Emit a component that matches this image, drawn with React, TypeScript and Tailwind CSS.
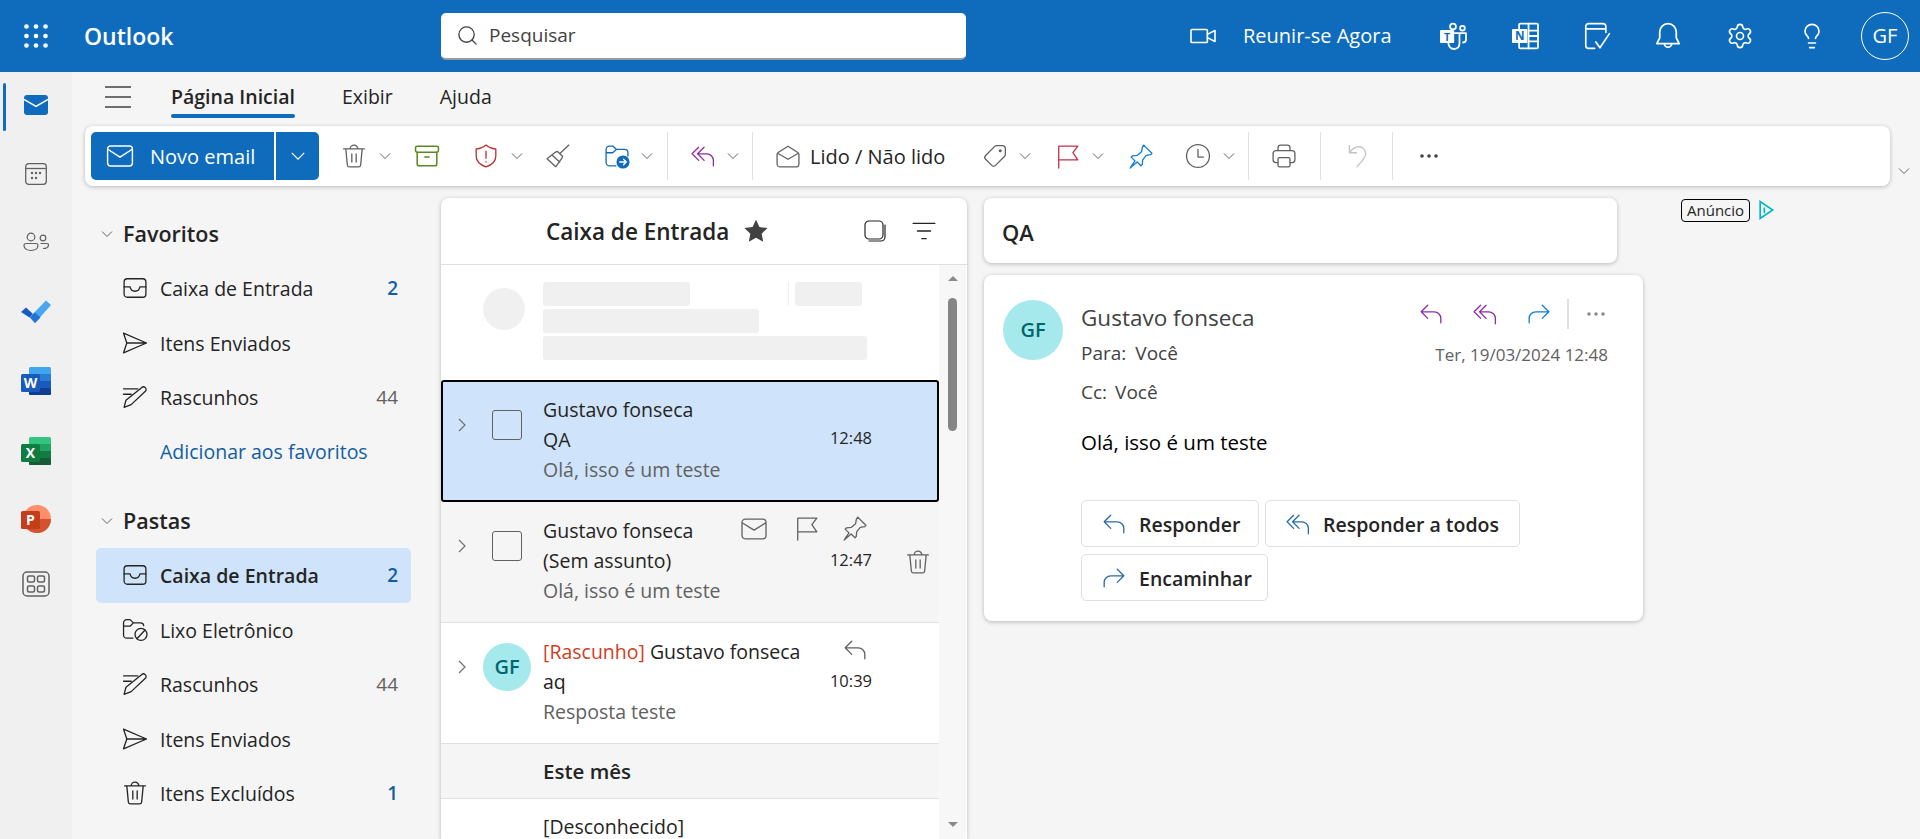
import type { ReactNode } from "react"
import { Search, Settings, Lightbulb } from "lucide-react"

const Ico = ({ children, className = "", sw = 1.2, size = 24 }: { children: ReactNode; className?: string; sw?: number; size?: number }) => (
  <svg
    viewBox="1 1 22 22"
    width={size}
    height={size}
    fill="none"
    stroke="currentColor"
    strokeWidth={sw}
    strokeLinecap="round"
    strokeLinejoin="round"
    className={`shrink-0 overflow-visible ${className}`}
  >
    {children}
  </svg>
)

type IconProps = { className?: string; size?: number; sw?: number }

const TrashIcon = (p: IconProps) => (
  <Ico {...p}>
    <path d="M2.5 5.5h19M8.5 5.5a3.5 3.5 0 0 1 7 0M4.5 5.5l1.4 14.7a2 2 0 0 0 2 1.8h8.2a2 2 0 0 0 2-1.8l1.4-14.7M10 10v7.5M14 10v7.5" />
  </Ico>
)
const ArchiveIcon = (p: IconProps) => (
  <Ico {...p} sw={1.4}>
    <rect x="1.5" y="3" width="21" height="5.5" rx="1.5" />
    <path d="M3 8.5V19a2 2 0 0 0 2 2h14a2 2 0 0 0 2-2V8.5M10 13h4" />
  </Ico>
)
const ShieldIcon = (p: IconProps) => (
  <Ico {...p}>
    <path d="M12 2C9.6 4.3 7 5.3 3 5.6V12c0 4.8 3 8 9 10 6-2 9-5.2 9-10V5.6C17 5.3 14.4 4.3 12 2z" />
    <path d="M12 7.5v6.5M12 17.2v.3" />
  </Ico>
)
const BroomIcon = (p: IconProps) => (
  <Ico {...p}>
    <path d="M22 2l-8.5 8M11.5 7.8l4.7 4.4-.6 1.7-5.7 8L2 14.5l7.8-6.1zM6.5 11l7 6.5" />
  </Ico>
)
const MoveIcon = (p: IconProps) => (
  <Ico {...p}>
    <path d="M11 21H5a3 3 0 0 1-3-3V6a3 3 0 0 1 3-3h3.5l3 3H19a3 3 0 0 1 3 3v3M2 9h6l3.5-3" />
    <circle cx="17.5" cy="17.5" r="6" fill="#0f6cbd" stroke="none" />
    <path d="M14.5 17.5h6M18 15l2.5 2.5-2.5 2.5" stroke="#fff" />
  </Ico>
)
const ReplyAllIcon = (p: IconProps) => (
  <Ico {...p}>
    <path d="M8 4L2 10l6 6M13 4l-6 6 6 6M7 10h8.5a6 6 0 0 1 6 6v5" />
  </Ico>
)
const ReplyIcon = (p: IconProps) => (
  <Ico {...p}>
    <path d="M9 4l-6 6 6 6M3 10h12a6 6 0 0 1 6 6v4" />
  </Ico>
)
const ForwardIcon = (p: IconProps) => (
  <Ico {...p}>
    <path d="M15 4l6 6-6 6M21 10H9a6 6 0 0 0-6 6v4" />
  </Ico>
)
const MailOpenIcon = (p: IconProps) => (
  <Ico {...p}>
    <path d="M2 10.5a2 2 0 0 1 1-1.7L12 3l9 5.8a2 2 0 0 1 1 1.7V19a3 3 0 0 1-3 3H5a3 3 0 0 1-3-3zM2.5 9.5L12 15l9.5-5.5" />
  </Ico>
)
const TagIcon = (p: IconProps) => (
  <Ico {...p}>
    <path d="M13.5 2.5H19A2.500 2.500 0 0 1 21.500 5v5.500a2.500 2.500 0 0 1-.7 1.800l-8.300 8.300a2.500 2.500 0 0 1-3.500 0l-5.600-5.600a2.500 2.500 0 0 1 0-3.500l8.300-8.300a2.500 2.500 0 0 1 1.800-.7z" />
    <circle cx="16.8" cy="7.2" r=".8" fill="currentColor" />
  </Ico>
)
const FlagIcon = (p: IconProps) => (
  <Ico {...p}>
    <path d="M3.5 23V3H21l-4.500 6 4.500 6.500H3.500" />
  </Ico>
)
const PinIcon = (p: IconProps) => (
  <Ico {...p}>
    <path d="M14.5 2l7.500 7.500-1 1.300-4.200.7-3.300 4-.3 4.200-1.200 1.300-3.500-3.500L2 23l4.500-6.500L3 13l1.300-1.200 4.200-.3 4-3.300.7-4.200z" />
  </Ico>
)
const ClockIcon = (p: IconProps) => (
  <Ico {...p}>
    <circle cx="12" cy="12" r="10.5" />
    <path d="M12 6v7h5" />
  </Ico>
)
const PrinterIcon = (p: IconProps) => (
  <Ico {...p}>
    <path d="M6.5 7V4.500A2.500 2.500 0 0 1 9 2h6a2.500 2.500 0 0 1 2.500 2.500V7" />
    <path d="M6.5 18h-2A2.500 2.500 0 0 1 2 15.500v-6A2.500 2.500 0 0 1 4.500 7h15A2.500 2.500 0 0 1 22 9.500v6a2.500 2.500 0 0 1-2.500 2.500h-2" />
    <rect x="6.5" y="13.5" width="11" height="8.5" rx="1.5" />
  </Ico>
)
const UndoIcon = (p: IconProps) => (
  <Ico {...p}>
    <path d="M5 2.5V9h6.500M5 9c3-4 6-5.500 8.500-5.500 4 0 6.500 3 6.500 6.500 0 4-5 8-8 12" />
  </Ico>
)
const DotsIcon = ({ className = "" }: { className?: string }) => (
  <svg viewBox="0 0 24 24" width="24" height="24" fill="currentColor" className={`shrink-0 ${className}`}>
    <circle cx="5" cy="12" r="1.8" />
    <circle cx="12" cy="12" r="1.8" />
    <circle cx="19" cy="12" r="1.8" />
  </svg>
)
const InboxIcon = (p: IconProps) => (
  <Ico {...p}>
    <rect x="2" y="3.5" width="20" height="17" rx="3" />
    <path d="M2 11h5.500c.5 2.500 2 4 4.500 4s4-1.500 4.500-4H22" />
  </Ico>
)
const SendIcon = (p: IconProps) => (
  <Ico {...p}>
    <path d="M1.5 3l21 9-21 9 3-9zM4.500 12h18" />
  </Ico>
)
const DraftIcon = (p: IconProps) => (
  <Ico {...p}>
    <path d="M1.5 4.500h13M1.500 9.500h7M2 21.500L3.700 15 18 3.500a2.400 2.400 0 0 1 3.500 3.300L8.500 19zM2 21.500L8.500 19" />
  </Ico>
)
const JunkIcon = (p: IconProps) => (
  <Ico {...p}>
    <path d="M10 19.5H4.500a3 3 0 0 1-3-3V5.500a3 3 0 0 1 3-3h3l3 3H17a3 3 0 0 1 3 2.500M1.500 8.500h6l3-3" />
    <circle cx="17.5" cy="16" r="5.5" />
    <path d="M13.8 20l7.400-8" />
  </Ico>
)
const Chevron = ({ className = "" }: { className?: string }) => (
  <svg viewBox="0 0 12 12" width="12" height="12" fill="none" stroke="currentColor" strokeWidth="1" className={`shrink-0 text-[#616161] ${className}`}>
    <path d="M1 3.5l5 5 5-5" />
  </svg>
)
const ChevronRight = () => (
  <svg viewBox="0 0 12 20" width="12" height="20" fill="none" stroke="#707070" strokeWidth="1.2" className="shrink-0">
    <path d="M3 4l6 6-6 6" />
  </svg>
)
const Sep = ({ className = "" }: { className?: string }) => <div className={`h-[48px] w-px shrink-0 bg-[#e0e0e0] ${className}`} />

const Waffle = () => (
  <svg viewBox="0 0 24 24" width="24" height="24" fill="#fff">
    {[2.5, 12, 21.5].map((y) => [2.5, 12, 21.5].map((x) => <circle key={`${x}-${y}`} cx={x} cy={y} r="2.3" />))}
  </svg>
)

const TopBar = () => (
  <header className="flex h-[72px] shrink-0 items-center bg-[#0f6cbd] text-white">
    <div className="ml-[24px]">
      <Waffle />
    </div>
    <span className="ml-[36px] w-[357px] text-[23px] font-semibold">Outlook</span>
    <div className="flex h-[47px] w-[525px] items-center rounded-[5px] border-b-2 border-[#9a9a9a] bg-white pl-[15px] text-[#424242]">
      <Search size={23} strokeWidth={1.4} className="text-[#424242]" />
      <span className="ml-[10px] text-[19px]">Pesquisar</span>
    </div>
    <div className="ml-[225px] flex items-center">
      <Ico size={24} sw={1.5}>
        <rect x="1" y="6" width="15" height="12" rx="1" />
        <path d="M16 10.5l7-3.500v10l-7-3.500" />
      </Ico>
      <span className="ml-[28px] w-[160px] whitespace-nowrap text-[20px]">Reunir-se Agora</span>
      <Ico size={26} className="ml-[37px]" sw={1.5}>
        <rect x="1" y="7" width="12" height="11" rx="1" fill="#fff" stroke="none" />
        <text x="7" y="16" textAnchor="middle" fontSize="9" fontWeight="700" fill="#0f6cbd" stroke="none" fontFamily="Open Sans, sans-serif">T</text>
        <circle cx="12" cy="4" r="2.5" />
        <circle cx="20" cy="5.5" r="2" />
        <path d="M13 9.5h10V15c0 1.500-1 2.500-2.500 2.500M8 18c.5 3 2.500 5 5 5 3 0 4.500-2 4.500-5V9.500" />
      </Ico>
      <Ico size={26} className="ml-[46px]" sw={1.5}>
        <rect x="7" y="1.5" width="16" height="21" rx="1" />
        <path d="M15 1.5v21M15 7.500h8M15 12h8M15 16.500h8" />
        <rect x="1" y="6" width="13" height="12" rx="1" fill="#fff" stroke="none" />
        <text x="7.5" y="15.5" textAnchor="middle" fontSize="10" fontWeight="700" fill="#0f6cbd" stroke="none" fontFamily="Open Sans, sans-serif">N</text>
      </Ico>
      <Ico size={26} className="ml-[46px]" sw={1.4}>
        <path d="M10 22.5H5A2.500 2.500 0 0 1 2.500 20V4A2.500 2.500 0 0 1 5 1.500h12A2.500 2.500 0 0 1 19.500 4v5M2.500 6h17M11 17l3.500 5L22.500 10" />
      </Ico>
      <Ico size={26} className="ml-[45px]" sw={1.5}>
        <path d="M12 1.5a7 7 0 0 0-7 7v5l-2.500 5h19L19 13.500v-5a7 7 0 0 0-7-7zM9 18.500a3 3 0 0 0 6 0" />
      </Ico>
      <Settings size={28} strokeWidth={1.4} className="ml-[45px] shrink-0" />
      <Lightbulb size={28} strokeWidth={1.4} className="ml-[44px] shrink-0" />
      <div className="ml-[35px] flex h-[48px] w-[48px] shrink-0 items-center justify-center rounded-full border border-white text-[20px]">GF</div>
    </div>
  </header>
)

const RailSlot = ({ children, className = "" }: { children: ReactNode; className?: string }) => (
  <div className={`flex w-[72px] justify-center ${className}`}>{children}</div>
)

const OfficeIcon = ({ letter, tile, colors }: { letter: string; tile: string; colors: string[] }) => (
  <svg viewBox="0 0 30 28" width="30" height="28">
    <rect x="8" y="0" width="22" height="28" rx="1.5" fill={colors[0]} />
    <rect x="8" y="7" width="22" height="7" fill={colors[1]} />
    <rect x="8" y="14" width="22" height="7" fill={colors[2]} />
    <rect x="8" y="21" width="22" height="7" rx="1" fill={colors[3]} />
    <rect x="0" y="7" width="19" height="18" rx="1.5" fill={tile} />
    <text x="9.5" y="21" textAnchor="middle" fontSize="14" fontWeight="700" fill="#fff" fontFamily="Open Sans, sans-serif">{letter}</text>
  </svg>
)

const Rail = () => (
  <nav className="relative flex w-[72px] shrink-0 flex-col bg-[#f0f0f0] pt-[23px]">
    <div className="absolute left-[3px] top-[11px] h-[48px] w-[3px] rounded-full bg-[#0f6cbd]" />
    <RailSlot>
      <svg viewBox="0 0 24 20" width="24" height="20">
        <rect width="24" height="20" rx="3" fill="#0f6cbd" />
        <path d="M0 4.5l12 7 12-7" fill="none" stroke="#fff" strokeWidth="1.5" />
      </svg>
    </RailSlot>
    <RailSlot className="mt-[48px] text-[#616161]">
      <svg viewBox="0 0 22 22" width="22" height="22" fill="none" stroke="currentColor" strokeWidth="1.3">
        <rect x=".7" y=".7" width="20.6" height="20.6" rx="3" />
        <path d="M1 5.5h20" />
        <g fill="currentColor" stroke="none">
          <circle cx="7" cy="10" r="1.2" />
          <circle cx="11" cy="10" r="1.2" />
          <circle cx="15" cy="10" r="1.2" />
          <circle cx="7" cy="15" r="1.2" />
          <circle cx="11" cy="15" r="1.2" />
        </g>
      </svg>
    </RailSlot>
    <RailSlot className="mt-[47px] text-[#616161]">
      <svg viewBox="0 0 26 20" width="26" height="20" fill="none" stroke="currentColor" strokeWidth="1.2">
        <circle cx="8" cy="5" r="3.8" />
        <path d="M1 13.5c0-1 1-2 2-2h10c1 0 2 1 2 2 0 3-3 5-7 5s-7-2-7-5z" />
        <circle cx="20" cy="6" r="2.8" />
        <path d="M17.5 11.5H24c1 0 1.500.5 1.500 1.500 0 2.500-2.500 3.500-5.500 3.500" />
      </svg>
    </RailSlot>
    <RailSlot className="mt-[48px]">
      <svg viewBox="0 0 30 24" width="30" height="24">
        <path d="M0 12l5-4.500 7 6.500-3.500 3.500z" fill="#185abd" />
        <path d="M8.5 17.500L25 .5l5 4.500L14 23z" fill="#4aa6ef" />
        <path d="M9 17l5-4.500 5.500 5L14 23z" fill="#2173d5" />
      </svg>
    </RailSlot>
    <RailSlot className="mt-[43px]">
      <OfficeIcon letter="W" tile="#185abd" colors={["#41a5ee", "#2b7cd3", "#185abd", "#103f91"]} />
    </RailSlot>
    <RailSlot className="mt-[42px]">
      <OfficeIcon letter="X" tile="#107c41" colors={["#33c481", "#21a366", "#107c41", "#185c37"]} />
    </RailSlot>
    <RailSlot className="mt-[40px]">
      <svg viewBox="0 0 30 28" width="30" height="28">
        <circle cx="16" cy="14" r="14" fill="#ff8f6b" />
        <path d="M2 14a14 14 0 0 0 28 0z" fill="#d35230" />
        <rect x="0" y="6" width="19" height="18" rx="1.5" fill="#c43e1c" />
        <text x="9.5" y="20" textAnchor="middle" fontSize="14" fontWeight="700" fill="#fff" fontFamily="Open Sans, sans-serif">P</text>
      </svg>
    </RailSlot>
    <RailSlot className="mt-[38px] text-[#616161]">
      <svg viewBox="0 0 28 26" width="28" height="26" fill="none" stroke="currentColor" strokeWidth="1.5">
        <rect x="1" y="1" width="26" height="24" rx="4" />
        <rect x="5.5" y="5" width="7" height="6" rx="1.5" />
        <rect x="15.5" y="5" width="7" height="6" rx="1.5" />
        <rect x="5.5" y="15" width="7" height="6" rx="1.5" />
        <rect x="15.5" y="15" width="7" height="6" rx="1.5" />
      </svg>
    </RailSlot>
  </nav>
)

const Toolbar = () => (
  <div className="ml-[13px] flex items-center">
    <div className="flex h-[60px] w-[1805px] shrink-0 items-center rounded-lg bg-white pl-[6px] shadow-[0_1px_4px_rgba(0,0,0,0.25)]">
      <div className="flex h-[48px] w-[228px] shrink-0 items-center rounded-[5px] bg-[#0f6cbd] text-white">
        <Ico size={26} className="ml-[16px]" sw={1.2}>
          <rect x="1.5" y="3.5" width="21" height="17" rx="2.5" />
          <path d="M2 6.5l10 6.5 10-6.5" />
        </Ico>
        <span className="ml-[17px] w-[124px] whitespace-nowrap pt-[2px] text-[20px]">Novo email</span>
        <div className="h-[48px] w-[2px] bg-white" />
        <Chevron className="ml-[16px] scale-125 !text-white" />
      </div>
      <TrashIcon className="ml-[23px] text-[#616161]" />
      <Chevron className="ml-[13px]" />
      <ArchiveIcon className="ml-[24px] text-[#5c8a1e]" />
      <ShieldIcon className="ml-[35px] text-[#bc2f32]" />
      <Chevron className="ml-[13px]" />
      <BroomIcon className="ml-[23px] text-[#616161]" />
      <MoveIcon className="ml-[35px] text-[#0f6cbd]" />
      <Chevron className="ml-[12px]" />
      <Sep className="ml-[14px]" />
      <ReplyAllIcon className="ml-[23px] text-[#8f2da8]" />
      <Chevron className="ml-[12px]" />
      <Sep className="ml-[13px]" />
      <MailOpenIcon className="ml-[23px] text-[#616161]" />
      <span className="ml-[10px] w-[137px] whitespace-nowrap pt-[2px] text-[20px] text-[#242424]">Lido / Não lido</span>
      <TagIcon className="ml-[36px] text-[#616161]" />
      <Chevron className="ml-[12px]" />
      <FlagIcon className="ml-[25px] text-[#c4314b]" />
      <Chevron className="ml-[12px]" />
      <PinIcon className="ml-[25px] text-[#0f7bdc]" />
      <ClockIcon className="ml-[33px] text-[#616161]" />
      <Chevron className="ml-[13px]" />
      <Sep className="ml-[13px]" />
      <PrinterIcon className="ml-[23px] text-[#616161]" />
      <Sep className="ml-[24px]" />
      <UndoIcon className="ml-[24px] text-[#c4c4c4]" />
      <Sep className="ml-[23px]" />
      <DotsIcon className="ml-[24px] text-[#424242]" />
    </div>
    <Chevron className="ml-[8px] mt-[30px]" />
  </div>
)

const FolderRow = ({ icon, label, count, selected, muted }: { icon: ReactNode; label: string; count?: string; selected?: boolean; muted?: boolean }) => (
  <div className={`flex h-[54.5px] items-center rounded-[5px] pl-[27px] pr-[13px] text-[#242424] ${selected ? "bg-[#cfe4fa] font-semibold" : ""}`}>
    <span className="w-[37px] shrink-0">{icon}</span>
    <span className="flex-1 whitespace-nowrap pt-[1px] text-[19.5px]">{label}</span>
    {count && <span className={`text-[19px] ${muted ? "text-[#616161]" : "font-semibold text-[#115ea3]"}`}>{count}</span>}
  </div>
)

const SectionHead = ({ label }: { label: string }) => (
  <div className="flex h-[54px] items-center text-[#242424]">
    <Chevron className="ml-[5px]" />
    <span className="ml-[10px] text-[21.5px] font-semibold">{label}</span>
  </div>
)

const FolderPane = () => (
  <aside className="ml-[24px] w-[315px] shrink-0 pt-[9px]">
    <SectionHead label="Favoritos" />
    <FolderRow icon={<InboxIcon />} label="Caixa de Entrada" count="2" />
    <FolderRow icon={<SendIcon />} label="Itens Enviados" />
    <FolderRow icon={<DraftIcon />} label="Rascunhos" count="44" muted />
    <div className="flex h-[54.5px] items-center whitespace-nowrap pl-[64px] text-[19.5px] text-[#115ea3]">Adicionar aos favoritos</div>
    <div className="mt-[15px]">
      <SectionHead label="Pastas" />
    </div>
    <FolderRow icon={<InboxIcon />} label="Caixa de Entrada" count="2" selected />
    <FolderRow icon={<JunkIcon />} label="Lixo Eletrônico" />
    <FolderRow icon={<DraftIcon />} label="Rascunhos" count="44" muted />
    <FolderRow icon={<SendIcon />} label="Itens Enviados" />
    <FolderRow icon={<TrashIcon />} label="Itens Excluídos" count="1" />
  </aside>
)

const Checkbox = () => <div className="h-[30px] w-[30px] shrink-0 rounded-[3px] border border-[#616161]" />

const MessageLine = ({ children, className = "" }: { children: ReactNode; className?: string }) => (
  <div className={`h-[30px] whitespace-nowrap text-[19.5px] leading-[30px] ${className}`}>{children}</div>
)

const MessageList = () => (
  <section className="ml-[30px] flex w-[526px] shrink-0 flex-col overflow-hidden rounded-t-lg bg-white shadow-[0_1px_4px_rgba(0,0,0,0.25)]">
    <div className="flex h-[67px] shrink-0 items-center border-b border-[#e0e0e0] text-[#242424]">
      <span className="ml-[105px] w-[184px] whitespace-nowrap pt-[2px] text-[22.5px] font-semibold">Caixa de Entrada</span>
      <svg viewBox="0 0 24 24" width="26" height="26" fill="#424242" className="ml-[13px]">
        <path d="M12 1.5l3.200 6.900 7.500.9-5.500 5.200 1.500 7.500L12 18.300l-6.700 3.700 1.500-7.500L1.300 9.300l7.500-.9z" />
      </svg>
      <Ico size={22} className="ml-[95px]" sw={1.2}>
        <rect x="2" y="2" width="18" height="18" rx="4" />
        <path d="M22 6v12a4 4 0 0 1-4 4H6" />
      </Ico>
      <Ico size={24} className="ml-[26px]" sw={1.2}>
        <path d="M2 5h20M6 12h12M10 19h4" />
      </Ico>
    </div>
    <div className="flex min-h-0 flex-1">
      <div className="w-[498px] shrink-0 bg-white">
        <div className="relative h-[115px]">
          <div className="absolute left-[42px] top-[23px] h-[42px] w-[42px] rounded-full bg-[#f0f0f0]" />
          <div className="absolute left-[102px] top-[17px] h-[24px] w-[147px] rounded-[3px] bg-[#f0f0f0]" />
          <div className="absolute left-[347px] top-[17px] h-[24px] w-px bg-[#f0f0f0]" />
          <div className="absolute left-[354px] top-[17px] h-[24px] w-[67px] rounded-[3px] bg-[#f0f0f0]" />
          <div className="absolute left-[102px] top-[44px] h-[24px] w-[216px] rounded-[3px] bg-[#f0f0f0]" />
          <div className="absolute left-[102px] top-[71px] h-[24px] w-[324px] rounded-[3px] bg-[#f0f0f0]" />
        </div>
        <div className="flex h-[122px] rounded-[3px] border-2 border-black bg-[#cfe4fa] pt-[13px] text-[#242424]">
          <div className="ml-[13px] flex h-[60px] w-[12px] items-center">
            <ChevronRight />
          </div>
          <div className="ml-[24px] flex h-[60px] w-[30px] items-center">
            <Checkbox />
          </div>
          <div className="ml-[21px] flex-1">
            <MessageLine>Gustavo fonseca</MessageLine>
            <MessageLine>QA</MessageLine>
            <MessageLine className="text-[#616161]">Olá, isso é um teste</MessageLine>
          </div>
          <div className="mr-[65px] pt-[28px] text-[16.5px] leading-[30px]">12:48</div>
        </div>
        <div className="relative flex h-[121px] border-b border-[#e0e0e0] bg-[#f5f5f5] pt-[14px] text-[#242424]">
          <div className="ml-[15px] flex h-[60px] w-[12px] items-center">
            <ChevronRight />
          </div>
          <div className="ml-[24px] flex h-[60px] w-[30px] items-center">
            <Checkbox />
          </div>
          <div className="ml-[21px] flex-1">
            <MessageLine>Gustavo fonseca</MessageLine>
            <MessageLine>(Sem assunto)</MessageLine>
            <MessageLine className="text-[#616161]">Olá, isso é um teste</MessageLine>
          </div>
          <div className="mr-[67px] pt-[29px] text-[16.5px] leading-[30px]">12:47</div>
          <Ico className="absolute left-[301px] top-[15px] text-[#616161]">
            <rect x="1" y="3" width="22" height="18" rx="3" />
            <path d="M1.5 6.5L12 13l10.500-6.500" />
          </Ico>
          <FlagIcon className="absolute left-[354px] top-[14px] text-[#616161]" />
          <PinIcon className="absolute left-[402px] top-[14px] text-[#616161]" />
          <TrashIcon className="absolute left-[465px] top-[48px] text-[#616161]" />
        </div>
        <div className="relative flex h-[121px] border-b border-[#e0e0e0] pt-[14px] text-[#242424]">
          <div className="ml-[15px] flex h-[60px] w-[12px] items-center">
            <ChevronRight />
          </div>
          <div className="ml-[15px] flex h-[60px] w-[48px] items-center">
            <div className="flex h-[48px] w-[48px] items-center justify-center rounded-full bg-[#a6e9ed] text-[20px] font-semibold text-[#00666d]">GF</div>
          </div>
          <div className="ml-[12px] flex-1">
            <MessageLine>
              <span className="text-[#d13c1f]">[Rascunho]</span> Gustavo fonseca
            </MessageLine>
            <MessageLine>aq</MessageLine>
            <MessageLine className="text-[#616161]">Resposta teste</MessageLine>
          </div>
          <div className="mr-[67px] pt-[29px] text-[16.5px] leading-[30px]">10:39</div>
          <ReplyIcon className="absolute left-[402px] top-[15px] text-[#616161]" />
        </div>
        <div className="flex h-[55px] items-center border-b border-[#e0e0e0] bg-[#f5f5f5] pl-[102px] text-[20.5px] font-semibold text-[#242424]">Este mês</div>
        <div className="pl-[102px] pt-[13px]">
          <MessageLine className="text-[#242424]">[Desconhecido]</MessageLine>
        </div>
      </div>
      <div className="relative flex w-[27px] shrink-0 flex-col items-center bg-[#f7f7f7]">
        <div className="absolute top-[11px] h-0 w-0 border-x-[5px] border-b-[5px] border-x-transparent border-b-[#8a8a8a]" />
        <div className="absolute top-[33px] h-[133px] w-[9px] rounded-full bg-[#858585]" />
        <div className="absolute bottom-[12px] h-0 w-0 border-x-[5px] border-t-[5px] border-x-transparent border-t-[#8a8a8a]" />
      </div>
    </div>
  </section>
)

const ReplyButton = ({ icon, label, className = "" }: { icon: ReactNode; label: string; className?: string }) => (
  <div className={`flex h-[47px] items-center rounded-[5px] border border-[#e0e0e0] bg-white pl-[20px] text-[#242424] ${className}`}>
    {icon}
    <span className="ml-[13px] whitespace-nowrap pt-[2px] text-[19.5px] font-semibold">{label}</span>
  </div>
)

const ReadingPane = () => (
  <section className="ml-[17px] flex w-[659px] shrink-0 flex-col">
    <div className="flex h-[65px] w-[633px] items-center rounded-lg bg-white pl-[18px] pt-[3px] text-[22px] font-semibold text-[#242424] shadow-[0_1px_4px_rgba(0,0,0,0.25)]">QA</div>
    <div className="relative mt-[12px] flex h-[346px] rounded-lg bg-white pl-[19px] pt-[25px] shadow-[0_1px_4px_rgba(0,0,0,0.25)]">
      <div className="flex h-[60px] w-[60px] shrink-0 items-center justify-center rounded-full bg-[#a6e9ed] text-[20px] font-semibold text-[#00666d]">GF</div>
      <div className="ml-[18px] flex-1 text-[#424242]">
        <div className="h-[36px] whitespace-nowrap text-[22.5px] leading-[36px]">Gustavo fonseca</div>
        <div className="mt-[2px] flex h-[30px] items-center text-[19px]">
          <span>Para:</span>
          <span className="ml-[9px]">Você</span>
        </div>
        <div className="mt-[9px] flex h-[30px] items-center text-[19px]">
          <span>Cc:</span>
          <span className="ml-[8px]">Você</span>
        </div>
        <div className="mt-[20px] h-[30px] text-[20.5px] leading-[30px] text-black">Olá, isso é um teste</div>
        <div className="mt-[43px] flex gap-[6px]">
          <ReplyButton icon={<ReplyIcon className="text-[#2b6ca8]" />} label="Responder" className="w-[178px]" />
          <ReplyButton icon={<ReplyAllIcon className="text-[#2b6ca8]" />} label="Responder a todos" className="w-[255px]" />
        </div>
        <ReplyButton icon={<ForwardIcon className="text-[#2b6ca8]" />} label="Encaminhar" className="mt-[7px] w-[187px]" />
      </div>
      <div className="absolute right-[35px] top-[24px] flex items-center">
        <ReplyIcon className="text-[#8f2da8]" />
        <ReplyAllIcon className="ml-[30px] text-[#8f2da8]" />
        <ForwardIcon className="ml-[30px] text-[#0f7bdc]" />
        <div className="ml-[16px] h-[30px] w-[2px] bg-[#e0e0e0]" />
        <DotsIcon className="ml-[15px] text-[#8a8a8a]" />
      </div>
      <div className="absolute right-[35px] top-[68px] whitespace-nowrap text-[17px] leading-[24px] text-[#616161]">Ter, 19/03/2024 12:48</div>
    </div>
  </section>
)

const AdTag = () => (
  <div className="ml-[38px] flex h-[24px] shrink-0 items-center">
    <span className="rounded-[4px] border border-black px-[5px] text-[15px] leading-[21px] text-[#242424]">Anúncio</span>
    <svg viewBox="0 0 20 24" width="18" height="20" fill="none" stroke="#00b7c3" strokeWidth="2" className="ml-[7px]">
      <path d="M3 2v20l15-10zM8 9v7" />
    </svg>
  </div>
)

export default function App() {
  return (
    <div className="flex h-[839px] w-[1920px] flex-col overflow-hidden bg-[#f5f5f5] font-['Open_Sans',sans-serif]">
      <TopBar />
      <div className="flex min-h-0 flex-1">
        <Rail />
        <main className="flex min-w-0 flex-1 flex-col">
          <div className="flex h-[54px] shrink-0 items-center pb-[4px] text-[19.5px] leading-[30px] text-[#242424]">
            <svg viewBox="0 0 26 22" width="26" height="22" stroke="#424242" strokeWidth="1.5" className="ml-[33px]">
              <path d="M0 1h26M0 11h26M0 21h26" />
            </svg>
            <div className="relative ml-[40px] whitespace-nowrap font-semibold">
              Página Inicial
              <div className="absolute -bottom-[6px] left-0 right-0 h-[4px] rounded-full bg-[#0f6cbd]" />
            </div>
            <span className="ml-[47px]">Exibir</span>
            <span className="ml-[47px]">Ajuda</span>
          </div>
          <Toolbar />
          <div className="mt-[12px] flex min-h-0 flex-1">
            <FolderPane />
            <MessageList />
            <ReadingPane />
            <AdTag />
          </div>
        </main>
      </div>
    </div>
  )
}
